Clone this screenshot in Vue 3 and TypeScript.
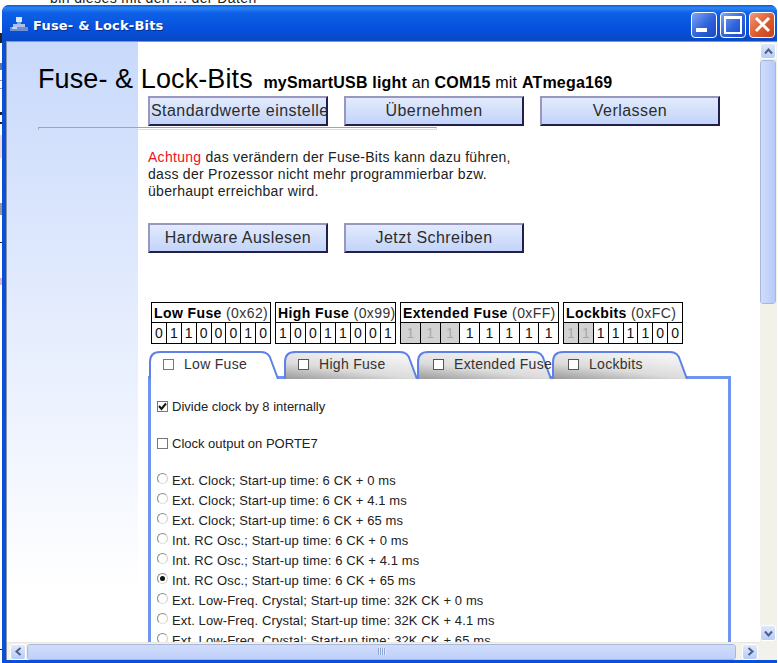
<script setup lang="ts">
const fuses = [
  { name: 'Low Fuse', hex: '(0x62)', bits: '01100010', width: 120, off: 0 },
  { name: 'High Fuse', hex: '(0x99)', bits: '10011001', width: 121, off: 0 },
  { name: 'Extended Fuse', hex: '(0xFF)', bits: '11111111', width: 159, off: 3 },
  { name: 'Lockbits', hex: '(0xFC)', bits: '11111100', width: 120, off: 2 },
]
const tabs = [
  { label: 'Low Fuse', slot: 135, shape: 130, inset: 14, active: true },
  { label: 'High Fuse', slot: 133, shape: 134, inset: 14, active: false },
  { label: 'Extended Fuse', slot: 135, shape: 135, inset: 16, active: false },
  { label: 'Lockbits', slot: 136, shape: 136, inset: 16, active: false },
]
const opts = [
  { t: 'Ext. Clock; Start-up time: 6 CK + 0 ms' },
  { t: 'Ext. Clock; Start-up time: 6 CK + 4.1 ms' },
  { t: 'Ext. Clock; Start-up time: 6 CK + 65 ms' },
  { t: 'Int. RC Osc.; Start-up time: 6 CK + 0 ms' },
  { t: 'Int. RC Osc.; Start-up time: 6 CK + 4.1 ms' },
  { t: 'Int. RC Osc.; Start-up time: 6 CK + 65 ms', on: true },
  { t: 'Ext. Low-Freq. Crystal; Start-up time: 32K CK + 0 ms' },
  { t: 'Ext. Low-Freq. Crystal; Start-up time: 32K CK + 4.1 ms' },
  { t: 'Ext. Low-Freq. Crystal; Start-up time: 32K CK + 65 ms' },
]
function tabPath(w: number): string {
  return `M1 29 L1 12 Q1 2 11 2 L${w - 18} 2 Q${w - 10} 2 ${w - 8} 10 L${w - 1} 29`
}
</script>

<template>
  <div class="desk">
    <p class="behind">bin dieses mit den ... der Daten</p>
    <div class="strip"></div>
    <section class="win">
      <header class="title">
        <svg class="appicon" width="18" height="15" viewBox="0 0 18 15">
          <rect x="6" y="0" width="6" height="5" fill="#dbe6fa" />
          <rect x="7" y="5" width="4" height="3" fill="#7f9fdc" />
          <rect x="3" y="7" width="12" height="3" fill="#a9c2ee" />
          <rect x="0" y="10" width="18" height="4" fill="#6f8fd0" />
          <rect x="2" y="10" width="5" height="2" fill="#c4d6f6" />
        </svg>
        <span class="title-text">Fuse- &amp; Lock-Bits</span>
        <div class="ctrls">
          <button class="ctl"><i class="min"></i></button>
          <button class="ctl"><i class="max"></i></button>
          <button class="ctl close">
            <svg width="19" height="19" viewBox="0 0 19 19"><path d="M3 3 L16 16 M16 3 L3 16" stroke="#fff" stroke-width="3" /></svg>
          </button>
        </div>
      </header>
      <div class="client">
        <div class="left-col">
          <div class="view">
            <h1 class="head">Fuse- &amp; Lock-Bits <small><b>mySmartUSB light</b> an <b>COM15</b> mit <b>ATmega169</b></small></h1>
            <div class="inner">
              <div class="btns">
                <button class="btn clip">Standardwerte einstellen</button>
                <button class="btn">Übernehmen</button>
                <button class="btn">Verlassen</button>
              </div>
            </div>
            <hr class="rule" />
            <div class="inner">
              <p class="warn"><span class="red">Achtung</span> das verändern der Fuse-Bits kann dazu führen,<br />dass der Prozessor nicht mehr programmierbar bzw.<br />überhaupt erreichbar wird.</p>
              <div class="btns second">
                <button class="btn">Hardware Auslesen</button>
                <button class="btn">Jetzt Schreiben</button>
              </div>
              <div class="fuses">
                <div v-for="f in fuses" :key="f.name" class="fuse" :style="{ width: f.width + 'px' }">
                  <div class="fuse-head"><b>{{ f.name }}</b> {{ f.hex }}</div>
                  <div class="bits">
                    <span v-for="(b, i) in f.bits.split('')" :key="i" class="bit" :class="{ off: i < f.off }">{{ b }}</span>
                  </div>
                </div>
              </div>
              <div class="tabs">
                <div v-for="t in tabs" :key="t.label" class="tab" :class="{ active: t.active }" :style="{ width: t.slot + 'px', paddingLeft: t.inset + 'px' }">
                  <svg class="tab-bg" :width="t.shape" height="29" :viewBox="`0 0 ${t.shape} 29`">
                    <defs>
                      <linearGradient id="tabg" x1="0" y1="1" x2="0.6" y2="0">
                        <stop offset="0" stop-color="#9a9a9a" />
                        <stop offset="0.45" stop-color="#dcdcdc" />
                        <stop offset="1" stop-color="#f4f4f4" />
                      </linearGradient>
                    </defs>
                    <path :d="tabPath(t.shape)" :fill="t.active ? '#fff' : 'url(#tabg)'" stroke="#5f80e6" stroke-width="2" />
                  </svg>
                  <span class="box tab-box" :class="{ white: !t.active }"></span>
                  <span class="tab-label">{{ t.label }}</span>
                </div>
              </div>
              <div class="panel">
                <div class="row first"><span class="box checked"><svg width="9" height="9" viewBox="0 0 9 9"><path d="M1 4 L3.5 7 L8 1.5" fill="none" stroke="#111" stroke-width="2" /></svg></span>Divide clock by 8 internally</div>
                <div class="row mid"><span class="box"></span>Clock output on PORTE7</div>
                <div v-for="o in opts" :key="o.t" class="row opt"><span class="radio" :class="{ on: o.on }"></span>{{ o.t }}</div>
              </div>
            </div>
          </div>
          <div class="hbar">
            <span class="sb-btn"><svg width="9" height="9" viewBox="0 0 9 9"><path d="M6.5 1 L2.5 4.5 L6.5 8" fill="none" stroke="#4d6185" stroke-width="2" /></svg></span>
            <div class="hthumb"><span class="grip"></span></div>
            <span class="hrest"></span>
            <span class="sb-btn"><svg width="9" height="9" viewBox="0 0 9 9"><path d="M2.5 1 L6.5 4.5 L2.5 8" fill="none" stroke="#4d6185" stroke-width="2" /></svg></span>
          </div>
        </div>
        <div class="vbar">
          <span class="sb-btn"><svg width="9" height="9" viewBox="0 0 9 9"><path d="M1 6.5 L4.5 2.5 L8 6.5" fill="none" stroke="#4d6185" stroke-width="2" /></svg></span>
          <div class="vthumb"></div>
          <span class="vrest"></span>
          <span class="sb-btn"><svg width="9" height="9" viewBox="0 0 9 9"><path d="M1 2.5 L4.5 6.5 L8 2.5" fill="none" stroke="#4d6185" stroke-width="2" /></svg></span>
        </div>
      </div>
    </section>
  </div>
</template>

<style>
html, body { margin: 0; background: #fff; overflow: hidden; }
</style>

<style scoped>
.desk { position: relative; width: 778px; height: 663px; overflow: hidden; background: #fff; font-family: "Liberation Sans", Arial, sans-serif; }
.behind { position: absolute; left: 50px; top: -10px; margin: 0; font-size: 14px; letter-spacing: .4px; color: #222; white-space: nowrap; }
.strip { position: absolute; left: 0; top: 0; width: 2px; height: 663px; background: linear-gradient(#fff 33px, #222 33px 43px, #fff 43px 63px, #5a7ab0 63px 70px, #fff 70px 80px, #999 80px 81px, #fff 81px 88px, #999 88px 89px, #fff 89px 112px, #222 112px 115px, #fff 115px 122px, #222 122px 124px, #fff 124px 135px, #f4dada 135px 158px, #fff 158px 203px, #999 203px 215px, #fff 215px 242px, #222 242px 243px, #fff 243px 278px, #e0b8d0 278px 285px, #fff 285px 649px, #222 649px 650px, #fff 650px); }
.win { position: absolute; left: 2px; top: 5px; width: 775px; height: 658px; display: flex; flex-direction: column; background: #0a4fd8; border-radius: 7px 7px 0 0; box-sizing: border-box; padding: 0 0 3px; }
.title { height: 36px; flex: none; box-sizing: border-box; display: flex; align-items: center; padding: 3px 2px 0 8px; background: linear-gradient(#0a57d6 0, #2b86f5 8%, #0f60e6 22%, #0550dc 70%, #0a49c0 100%); border-radius: 7px 7px 0 0; }
.appicon { margin-right: 5px; }
.title-text { color: #fff; padding-top: 2px; font: bold 13px "DejaVu Sans", sans-serif; letter-spacing: .2px; text-shadow: 1px 1px 0 #0a2f90; }
.ctrls { margin-left: auto; display: flex; gap: 3px; }
.ctl { width: 26px; height: 26px; padding: 0; border: 1px solid #fff; border-radius: 4px; background: linear-gradient(135deg, #7da6f2, #2e62dc 55%, #1c48c0); position: relative; display: flex; align-items: center; justify-content: center; }
.min { position: absolute; left: 4px; bottom: 5px; width: 11px; height: 4px; background: #fff; }
.max { box-sizing: border-box; width: 18px; height: 18px; border: 2px solid #fff; border-top-width: 3px; }
.close { background: linear-gradient(135deg, #f09a78, #dd5a2c 55%, #c4421a); }
.client { flex: 1; min-height: 0; display: flex; margin-left: 4px; background: #fff; border-top: 1px solid #8a93a8; border-left: 1px solid #8a93a8; }
.left-col { flex: 1; min-width: 0; display: flex; flex-direction: column; }
.view { flex: 1; min-height: 0; overflow: hidden; background: linear-gradient(#c8d9fb, #dbe6fd 30%, #fff 92%) no-repeat 0 0 / 131px 100%; }
.head { margin: 0; padding: 20px 0 0 31px; height: 34px; font-weight: 400; font-size: 27px; letter-spacing: .1px; line-height: 34px; color: #000; white-space: nowrap; }
.head small { font-size: 16px; letter-spacing: .2px; margin-left: 3px; }
.inner { padding-left: 141px; }
.btns { display: flex; gap: 16px; }
.btn { width: 180px; height: 30px; padding: 0; box-sizing: border-box; font: 16px "Liberation Sans", sans-serif; letter-spacing: .45px; color: #2c2c2c; border-width: 2px; border-style: solid; border-color: #9797c0 #20204a #20204a #9797c0; background: linear-gradient(#e2ebfd, #c3d4f9); white-space: nowrap; overflow: hidden; }
.btn.clip { text-align: left; padding-left: 1px; }
.rule { box-sizing: border-box; margin: 1px 0 0 31px; width: 399px; height: 3px; border: 1px solid #a5a59a; border-bottom-color: #e0e0d6; border-right-color: #d8d8d0; }
.warn { margin: 19px 0 0; font-size: 14px; letter-spacing: .28px; line-height: 17px; color: #222; }
.red { color: #ee1122; }
.second { margin-top: 23px; }
.fuses { display: flex; gap: 4px; margin: 49px 0 0 3px; }
.fuse { flex: none; box-sizing: border-box; border: 1px solid #000; }
.fuse-head { height: 19px; font-size: 14px; letter-spacing: .4px; line-height: 20px; padding-left: 2px; color: #333; border-bottom: 1px solid #000; white-space: nowrap; }
.fuse-head b { color: #000; }
.bits { display: flex; height: 20px; }
.bit { flex: 1; font-size: 14px; line-height: 20px; text-align: center; color: #111; border-left: 1px solid #000; }
.bit:first-child { border-left: 0; }
.bit.off { background: #d2d2d2; color: #a8a8a8; }
.tabs { display: flex; margin: 6px 0 -3px 1px; height: 29px; position: relative; z-index: 1; }
.tab { position: relative; flex: none; box-sizing: border-box; height: 28px; display: flex; align-items: center; font-size: 14px; letter-spacing: .3px; color: #333; }
.tab-bg { position: absolute; left: 0; top: 0; }
.tab-box { position: relative; margin-right: 10px; width: 12px; height: 12px; border-color: #aaa; }
.tab-box.white { border-color: #555; }
.tab-label { position: relative; white-space: nowrap; }
.box { flex: none; display: inline-block; box-sizing: border-box; width: 11px; height: 11px; border: 1px solid #777; background: #fff; }
.box.checked { display: inline-flex; align-items: center; justify-content: center; }
.panel { box-sizing: border-box; width: 583px; height: 300px; border: 3px solid #6f94ec; border-bottom: 0; overflow: hidden; font-size: 13px; color: #222; padding: 0 0 0 6px; }
.row { display: flex; align-items: center; height: 20px; white-space: nowrap; }
.row .box { margin-right: 4px; }
.first { margin-top: 17px; }
.mid { margin-top: 17px; }
.mid + .opt { margin-top: 17px; }
.opt { letter-spacing: .12px; }
.radio { flex: none; width: 11px; height: 11px; box-sizing: border-box; margin-right: 4px; border-radius: 50%; border: 1px solid #8a8a80; border-bottom-color: #e0e0d8; border-right-color: #d0d0c8; background: #fff; position: relative; top: -2px; display: block; }
.radio.on::after { content: ""; position: absolute; left: 2px; top: 2px; width: 5px; height: 5px; border-radius: 50%; background: #111; }
.hbar { flex: none; height: 18px; display: flex; align-items: center; background: #f3f2ea; padding-left: 3px; padding-right: 2px; border-top: 1px solid #e8e8e0; box-sizing: border-box; }
.sb-btn { flex: none; width: 16px; height: 16px; box-sizing: border-box; display: flex; align-items: center; justify-content: center; border: 1px solid #fff; border-radius: 3px; background: linear-gradient(#dfe8fd, #b9ccf8); }
.hthumb { width: 709px; margin-left: 1px; height: 16px; box-sizing: border-box; border: 1px solid #fff; outline: 1px solid #a9b8d8; outline-offset: -1px; border-radius: 3px; background: linear-gradient(#cfdcfb, #bfd0f9); display: flex; align-items: center; justify-content: center; }
.grip { width: 8px; height: 7px; background: repeating-linear-gradient(90deg, #8ea4d0 0 1px, #e6edfd 1px 2px); }
.hrest { flex: 1; }
.vbar { flex: none; width: 17px; display: flex; flex-direction: column; background: #f3f2ea; padding-top: 1px; }
.vthumb { height: 244px; margin: 1px 0 0; width: 16px; box-sizing: border-box; border: 1px solid #fff; outline: 1px solid #a9b8d8; outline-offset: -1px; border-radius: 3px; background: linear-gradient(90deg, #cfdcfb, #b7caf8); }
.vrest { flex: 1; }
.vbar .sb-btn:last-child { margin-bottom: 19px; }
</style>
